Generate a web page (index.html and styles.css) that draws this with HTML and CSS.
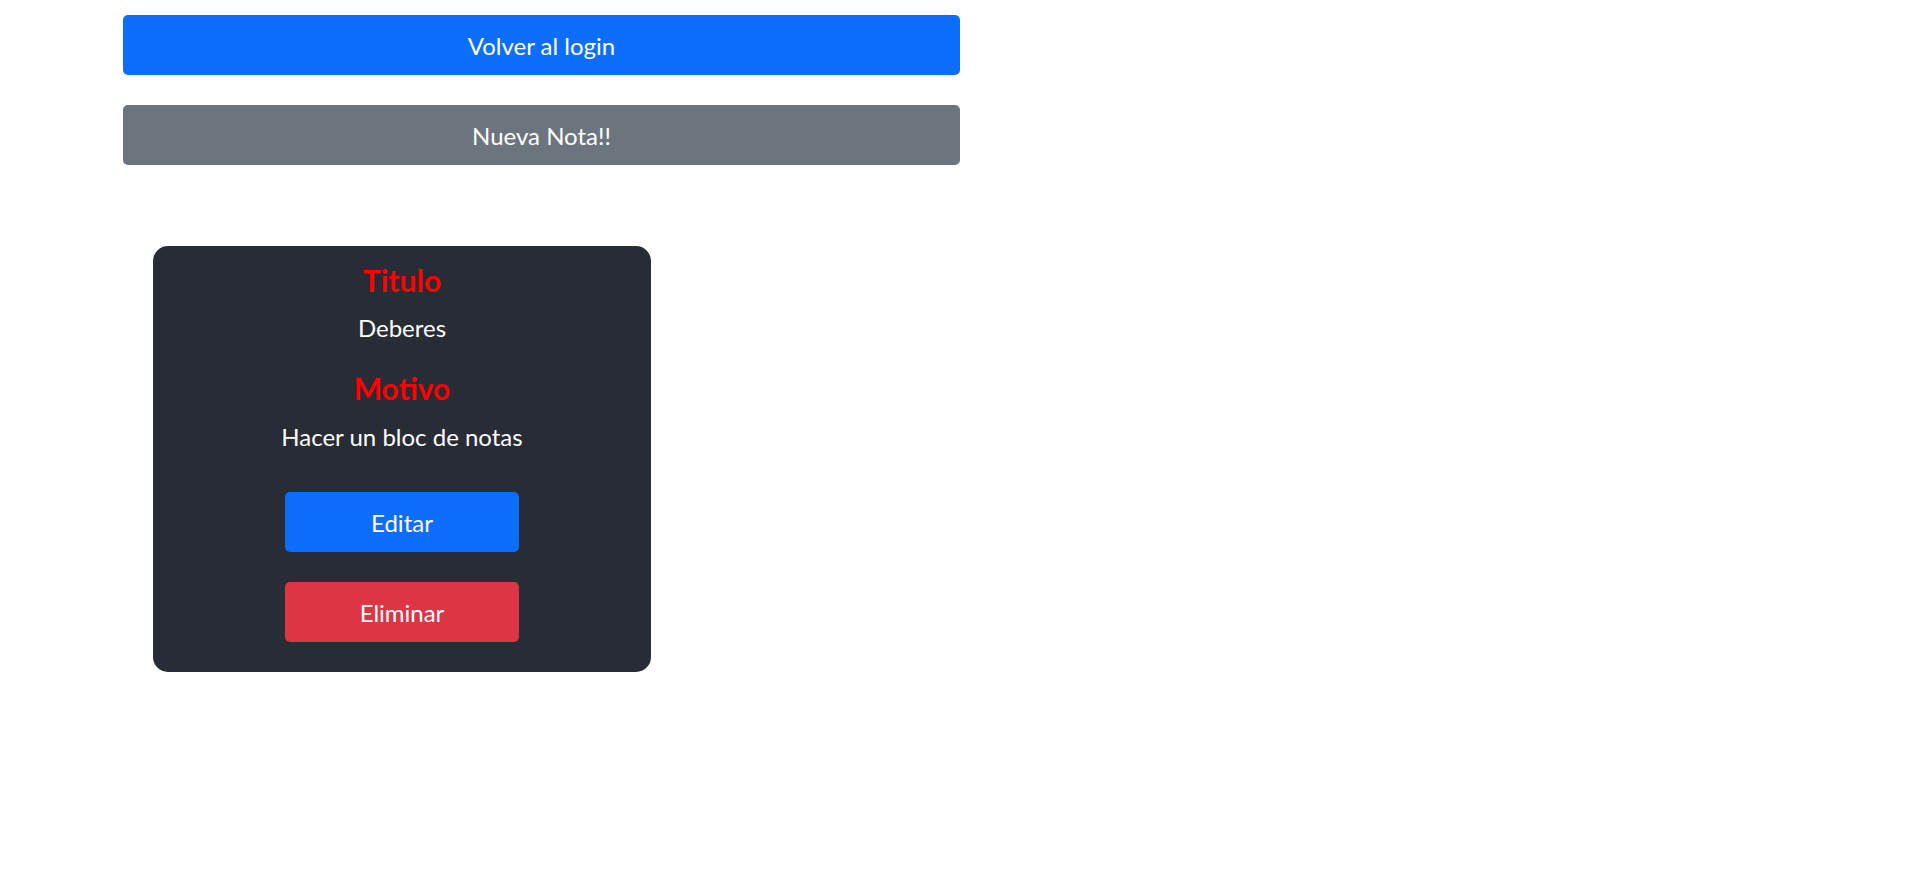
FILE: index.html
```html
<!DOCTYPE html>
<html lang="es">
<head>
<meta charset="utf-8">
<title>Notas</title>
<link rel="stylesheet" href="styles.css">
</head>
<body>
<div class="page">
  <div class="actions">
    <button class="btn btn-primary btn-wide">Volver al login</button>
    <button class="btn btn-secondary btn-wide">Nueva Nota!!</button>
  </div>
  <div class="notes">
    <div class="note-card">
      <h2 class="note-label">Titulo</h2>
      <p class="note-value note-title">Deberes</p>
      <h2 class="note-label note-label-second">Motivo</h2>
      <p class="note-value note-reason">Hacer un bloc de notas</p>
      <button class="btn btn-primary btn-card btn-edit">Editar</button>
      <button class="btn btn-danger btn-card btn-delete">Eliminar</button>
    </div>
  </div>
</div>
</body>
</html>
```
FILE: styles.css
```css
html, body {
  margin: 0;
  padding: 0;
  background: #ffffff;
}

body {
  font-family: Lato, "Noto Sans", sans-serif;
}

.page {
  padding: 15px 0 0 123px;
}

.actions {
  width: 837px;
  display: flex;
  flex-direction: column;
  gap: 30px;
}

.btn {
  display: block;
  box-sizing: border-box;
  height: 60px;
  border: 0;
  border-radius: 5px;
  color: #ffffff;
  font-family: Lato, "Noto Sans", sans-serif;
  font-size: 24px;
  line-height: 30px;
  padding: 2px 0 0;
  text-align: center;
  cursor: pointer;
}

.btn-wide {
  width: 100%;
}

.btn-primary {
  background: #0d6efd;
}

.btn-secondary {
  background: #6c757d;
}

.btn-danger {
  background: #dc3545;
}

.notes {
  margin-top: 81px;
  padding-left: 30px;
}

.note-card {
  width: 498px;
  box-sizing: border-box;
  background: #282c34;
  border-radius: 15px;
  padding: 16px 0 30px;
  display: flex;
  flex-direction: column;
  align-items: center;
  text-align: center;
}

.note-label {
  margin: 0;
  color: #ff0000;
  font-size: 30px;
  line-height: 36px;
  font-weight: 700;
}

.note-label-second {
  margin-top: 27px;
}

.note-value {
  margin: 0;
  color: #ffffff;
  font-size: 24px;
  line-height: 30px;
}

.note-title {
  margin-top: 15px;
}

.note-reason {
  margin-top: 16px;
}

.btn-card {
  width: 234px;
}

.btn-edit {
  margin-top: 40px;
}

.btn-delete {
  margin-top: 30px;
}
```
